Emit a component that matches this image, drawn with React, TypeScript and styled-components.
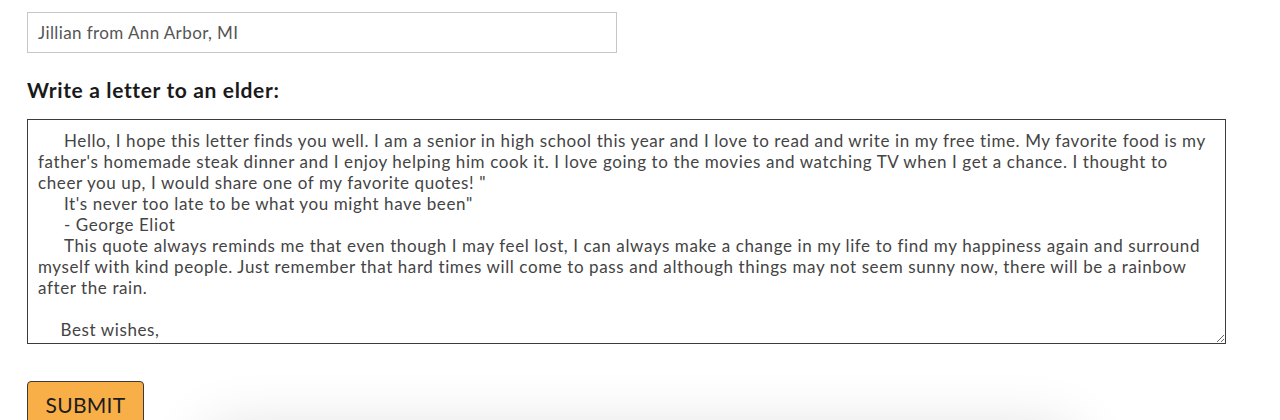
import React from "react";
import styled, { createGlobalStyle } from "styled-components";

const GlobalStyle = createGlobalStyle`
  html, body { margin: 0; padding: 0; background: #ffffff; }
  body { font-family: "Lato", "Open Sans", sans-serif; overflow: hidden; }
`;

const Page = styled.div`
  padding: 12px 0 0 27px;
  display: flex;
  flex-direction: column;
  align-items: flex-start;
`;

const NameInput = styled.input`
  box-sizing: border-box;
  width: 590px;
  height: 41px;
  border: 1px solid #c6c6c6;
  padding: 0 10px;
  font-family: "Lato", sans-serif;
  font-size: 17px;
  letter-spacing: 0.4px;
  color: #555555;
  background: #fff;
  outline: none;
`;

const Heading = styled.h3`
  margin: 25px 0 0;
  font-family: "Lato", sans-serif;
  font-weight: 700;
  font-size: 21px;
  letter-spacing: 0.65px;
  line-height: 24px;
  color: #1a1a1a;
`;

const Letter = styled.textarea`
  box-sizing: border-box;
  margin-top: 17px;
  width: 1199px;
  height: 225px;
  border: 1px solid #3a3d40;
  padding: 10px;
  font-family: "Lato", sans-serif;
  font-size: 17px;
  letter-spacing: 0.6px;
  line-height: 21px;
  color: #444444;
  tab-size: 26px;
  background: #fff;
  outline: none;
  scrollbar-width: none;
  resize: both;
`;

const SubmitButton = styled.button`
  margin-top: 37px;
  box-sizing: border-box;
  width: 117px;
  height: 46px;
  background: #f9af48;
  border: 1px solid #3d3a35;
  border-radius: 4px;
  font-family: "Lato", sans-serif;
  font-size: 21px;
  letter-spacing: 0.3px;
  color: #1c1c1c;
  padding: 0;
  text-align: center;
`;

const Card = styled.div`
  margin: 8px 0 0 183px;
  width: 860px;
  height: 200px;
  background: #fff;
  box-shadow: 0 0 60px rgba(0, 0, 0, 0.16);
`;

const letterText =
  "\tHello, I hope this letter finds you well. I am a senior in high school this year and I love to read and write in my free time. My favorite food is my father's homemade steak dinner and I enjoy helping him cook it. I love going to the movies and watching TV when I get a chance. I thought to cheer you up, I would share one of my favorite quotes! \"\n\tIt's never too late to be what you might have been\"\n\t- George Eliot\n\tThis quote always reminds me that even though I may feel lost, I can always make a change in my life to find my happiness again and surround myself with kind people. Just remember that hard times will come to pass and although things may not seem sunny now, there will be a rainbow after the rain.\n\n    \u2009Best wishes,\n                    Jillian";

export default function App() {
  return (
    <>
      <GlobalStyle />
      <Page>
        <NameInput defaultValue="Jillian from Ann Arbor, MI" />
        <Heading>Write a letter to an elder:</Heading>
        <Letter defaultValue={letterText} />
        <SubmitButton>SUBMIT</SubmitButton>
        <Card />
      </Page>
    </>
  );
}
